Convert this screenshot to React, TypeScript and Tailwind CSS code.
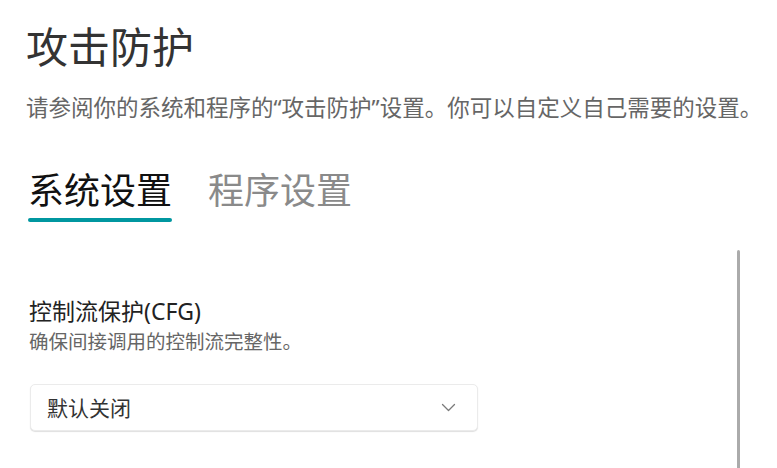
import React from 'react';

const Chevron = () => (
  <svg width="15" height="9" viewBox="0 0 15 9" fill="none">
    <polyline points="1.5,1.5 7.5,7.5 13.5,1.5" stroke="#7a7a7a" strokeWidth="1.3" strokeLinecap="round" strokeLinejoin="round" />
  </svg>
);

export default function App() {
  return (
    <div className="w-[777px] h-[468px] overflow-hidden bg-white flex flex-col font-['Noto_Sans','Noto_Sans_CJK_SC',sans-serif]">
      {/* Header */}
      <div className="pt-[23px] flex flex-col">
        <h1 className="pl-[26px] text-[42px] leading-[48px] text-[#333333] font-normal">攻击防护</h1>
        <p className="pl-[26px] mt-[22px] text-[22.5px] leading-[30px] text-[#666666] whitespace-nowrap">
          请参阅你的系统和程序的“攻击防护”设置。你可以自定义自己需要的设置。
        </p>

        {/* Tabs */}
        <div className="pl-[28px] mt-[46px] flex gap-[36px]">
          <div className="flex flex-col">
            <span className="text-[36px] leading-[44px] text-[#111111]">系统设置</span>
            <div className="mt-[5px] h-[4px] rounded-full bg-[#0097a0]" />
          </div>
          <div className="flex flex-col">
            <span className="text-[36px] leading-[44px] text-[#8a8a8a]">程序设置</span>
          </div>
        </div>
      </div>

      {/* Body */}
      <div className="flex flex-1 min-h-0">
        <div className="w-[737px] pl-[29px] pt-[75px] flex flex-col">
          <div className="text-[23px] leading-[28px] text-[#222222]">控制流保护(CFG)</div>
          <div className="mt-[4px] text-[19.5px] leading-[26px] text-[#666666]">确保间接调用的控制流完整性。</div>

          <button className="mt-[29px] ml-[1px] w-[448px] h-[47px] rounded-[5px] border border-[#ebebeb] shadow-[0_1px_1px_rgba(0,0,0,0.13)] bg-white flex items-center justify-between pl-[16px] pr-[21px]">
            <span className="text-[21px] leading-[26px] text-[#333333]">默认关闭</span>
            <Chevron />
          </button>
        </div>
        <div className="mt-[28px] w-[3px] bg-[#ababab] rounded-t-full" />
      </div>
    </div>
  );
}
